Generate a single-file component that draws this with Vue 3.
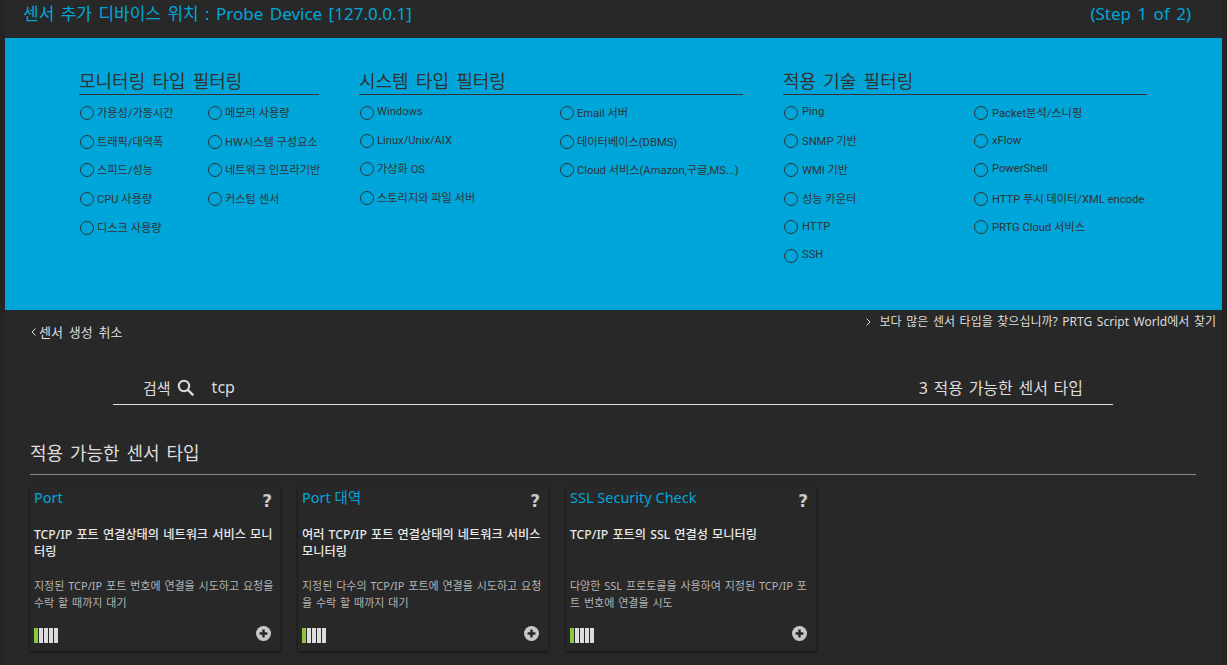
<script setup>
const filters = [
  { title: '모니터링 타입 필터링', cls: 'g1', cols: [
    ['가용성/가동시간','트래픽/대역폭','스피드/성능','CPU 사용량','디스크 사용량'],
    ['메모리 사용량','HW시스템 구성요소','네트워크 인프라기반','커스텀 센서'] ] },
  { title: '시스템 타입 필터링', cls: 'g2', cols: [
    ['Windows','Linux/Unix/AIX','가상화 OS','스토리지와 파일 서버'],
    ['Email 서버','데이터베이스(DBMS)','Cloud 서비스(Amazon,구글,MS...)'] ] },
  { title: '적용 기술 필터링', cls: 'g3', cols: [
    ['Ping','SNMP 기반','WMI 기반','성능 카운터','HTTP','SSH'],
    ['Packet분석/스니핑','xFlow','PowerShell','HTTP 푸시 데이터/XML encode','PRTG Cloud 서비스'] ] },
]
const cards = [
  { name:'Port', head:'TCP/IP 포트 연결상태의 네트워크 서비스 모니터링', body:'지정된 TCP/IP 포트 번호에 연결을 시도하고 요청을 수락 할 때까지 대기' },
  { name:'Port 대역', head:'여러 TCP/IP 포트 연결상태의 네트워크 서비스 모니터링', body:'지정된 다수의 TCP/IP 포트에 연결을 시도하고 요청을 수락 할 때까지 대기' },
  { name:'SSL Security Check', head:'TCP/IP 포트의 SSL 연결성 모니터링', body:'다양한 SSL 프로토콜을 사용하여 지정된 TCP/IP 포트 번호에 연결을 시도' },
]
</script>

<template>
  <div class="page">
    <header class="top">
      <span>센서 추가 디바이스 위치 : Probe Device [127.0.0.1]</span>
      <span>(Step 1 of 2)</span>
    </header>

    <section class="band">
      <div v-for="f in filters" :key="f.title" class="group" :class="f.cls">
        <h3>{{ f.title }}</h3>
        <div class="cols">
          <ul v-for="(c, i) in f.cols" :key="i">
            <li v-for="t in c" :key="t"><i class="radio"></i><span>{{ t }}</span></li>
          </ul>
        </div>
      </div>
    </section>

    <div class="links">
      <a class="back"><svg width="5" height="8" viewBox="0 0 5 8"><path d="M4.5 .5 1 4l3.5 3.5" fill="none" stroke="#ddd" stroke-width="1"/></svg>센서 생성 취소</a>
      <a class="more"><svg width="5" height="8" viewBox="0 0 5 8"><path d="M.5 .5 4 4 .5 7.5" fill="none" stroke="#ddd" stroke-width="1"/></svg>보다 많은 센서 타입을 찾으십니까? PRTG Script World에서 찾기</a>
    </div>

    <div class="search">
      <span class="lbl">검색</span>
      <svg class="mag" width="17" height="17" viewBox="0 0 17 17"><circle cx="7" cy="7" r="5.2" fill="none" stroke="#ddd" stroke-width="2"/><path d="M11 11l4.6 4.6" stroke="#ddd" stroke-width="2.4" stroke-linecap="round"/></svg>
      <span class="q">tcp</span>
      <span class="count">3 적용 가능한 센서 타입</span>
    </div>

    <h2 class="sect">적용 가능한 센서 타입</h2>

    <div class="cards">
      <article v-for="c in cards" :key="c.name" class="card">
        <div class="ctop">
          <span class="name">{{ c.name }}</span>
          <span class="help">?</span>
        </div>
        <p class="head">{{ c.head }}</p>
        <p class="body">{{ c.body }}</p>
        <div class="foot">
          <span class="bars"><b class="on"></b><b></b><b></b><b></b><b></b></span>
          <svg class="plus" width="15" height="15" viewBox="0 0 16 16"><circle cx="8" cy="8" r="8" fill="#c8c8c8"/><path d="M8 3.8v8.4M3.8 8h8.4" stroke="#282828" stroke-width="2.6"/></svg>
        </div>
      </article>
    </div>
  </div>
</template>

<style>
html, body { margin: 0; background: #242424; overflow: hidden; }
</style>

<style scoped>
.page {
  width: 1227px; height: 665px; overflow: hidden; box-sizing: border-box;
  background: linear-gradient(to right, #242424 5px, #282828 5px, #282828 1222px, #242424 1222px);
  padding: 0 5px;
  color: #ddd;
  font-family: "Noto Sans", "Noto Sans CJK KR", sans-serif;
}
.top {
  height: 38px; box-sizing: border-box; padding: 2px 31px 0 18px;
  display: flex; justify-content: space-between; align-items: flex-start;
  color: #00a6da; font-size: 17px; line-height: 24px; word-spacing: 2px;
}
.band {
  height: 272px; background: #00a6da; color: #333; box-sizing: border-box;
  padding: 30px 0 0 74px; display: flex; gap: 40px;
}
.group h3 {
  margin: 0; height: 27px; box-sizing: border-box; border-bottom: 1px solid #333;
  font-size: 18px; font-weight: 400; line-height: 27px; word-spacing: 2.5px;
}
.g1 { width: 240px; }
.g2 { width: 384px; }
.g3 { width: 364px; }
.cols { display: flex; padding-top: 2.5px; }
.cols ul { list-style: none; margin: 0; padding: 0; flex: none; }
.g1 ul:first-child { width: 128px; }
.g2 ul:first-child { width: 200px; }
.g3 ul:first-child { width: 190px; }
.cols li {
  height: 28.8px; display: flex; align-items: center; white-space: nowrap;
  font-family: Roboto, "Noto Sans CJK KR", sans-serif; font-size: 11.2px;
}
.g2 ul:first-child li { height: 28.4px; }
.g3 li { height: 28.6px; }
.radio {
  width: 14px; height: 14px; box-sizing: border-box; margin: 2px 3px 0 1px; flex: none;
  border: 1.5px solid #333; border-radius: 50%;
}
.g3 .radio { margin-right: 4px; }
.links {
  display: flex; justify-content: space-between; align-items: flex-start;
  padding: 0 6px 0 26px; height: 55px;
}
.links a { display: flex; align-items: center; }
.back { margin-top: 13px; gap: 3px; font-size: 13px; line-height: 18px; word-spacing: 2.5px; }
.more { margin-top: 3px; gap: 8px; font-size: 12px; line-height: 18px; word-spacing: 1.5px; }
.search {
  margin: 0 109px 0 108px; height: 40px; box-sizing: border-box;
  border-bottom: 1px solid #ddd; padding: 5px 30px 0 30px;
  display: flex; align-items: center; font-size: 15px; 
}
.mag { margin: 0 0 0 6px; }
.q { margin-left: 18px; font-size: 16px; }
.count { margin-left: auto; font-size: 16px; word-spacing: 1.5px; }
.sect {
  margin: 33px 26px 0 25px; height: 37px; box-sizing: border-box;
  border-bottom: 1px solid #8a8a8a;
  font-size: 18px; font-weight: 400; line-height: 30px; word-spacing: 2.2px;
}
.cards { display: flex; gap: 18px; margin: 11px 0 0 25px; }
.card {
  width: 250px; height: 165px; box-sizing: border-box; padding: 0 4px;
  position: relative; display: flex; flex-direction: column;
  box-shadow: 0 1px 3px rgba(0,0,0,.6);
}
.ctop { display: flex; justify-content: space-between; height: 30px; }
.name { color: #00a6da; font-size: 14.5px; line-height: 22px; }
.help { font-family: "DejaVu Sans", sans-serif; font-size: 17px; font-weight: 700; color: #c8c8c8; line-height: 30px; margin-right: 4px; }
.head { margin: 10px 0 0; height: 51px; font-size: 12.2px; font-weight: 500; line-height: 17px; color: #e8e8e8; word-spacing: 1px; }
.body { margin: 0; height: 46px; font-size: 11px; line-height: 17px; color: #b4b4b4; word-spacing: 1px; }
.foot { margin-top: auto; padding: 0 5px 2px 0; height: 24px; display: flex; justify-content: space-between; align-items: flex-start; }
.bars { display: flex; gap: 1px; margin-top: 3px; }
.bars b { width: 4px; height: 15px; background: #dcdcdc; }
.bars b.on { background: #8cc63f; }
.plus { margin-top: 1px; }
</style>
